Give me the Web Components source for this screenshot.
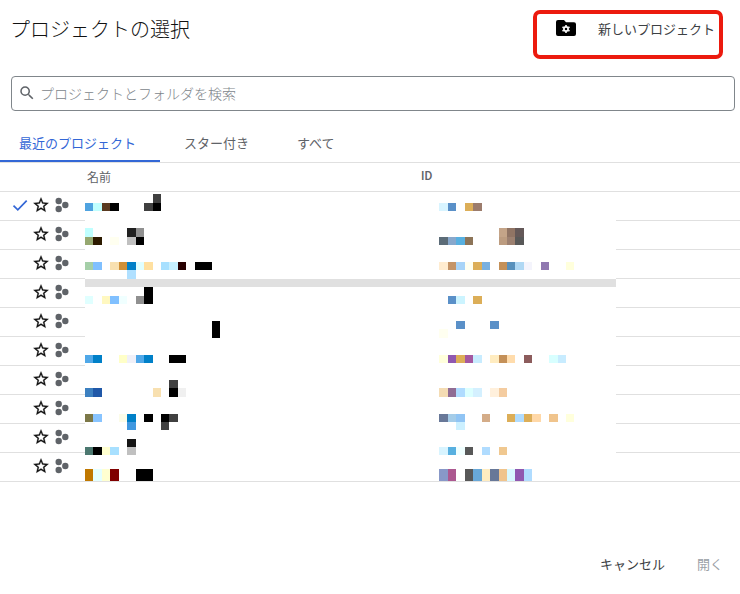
<!DOCTYPE html>
<html lang="ja">
<head>
<meta charset="utf-8">
<title>プロジェクトの選択</title>
<style>
  body {
    margin: 0;
    background: #fff;
    font-family: Roboto, "Noto Sans CJK JP", sans-serif;
  }
</style>
</head>
<body>
<project-dialog>
  <picker-header slot="header">プロジェクトの選択</picker-header>
  <picker-search slot="search">プロジェクトとフォルダを検索</picker-search>
  <picker-tabs slot="tabs"></picker-tabs>
  <project-table slot="table">
    <project-row current></project-row>
    <project-row></project-row>
    <project-row></project-row>
    <project-row></project-row>
    <project-row></project-row>
    <project-row></project-row>
    <project-row></project-row>
    <project-row></project-row>
    <project-row></project-row>
    <project-row></project-row>
    <pixel-mosaic slot="overlay"></pixel-mosaic>
  </project-table>
  <picker-footer slot="footer"></picker-footer>
</project-dialog>

<script>
class ProjectDialog extends HTMLElement {
  constructor() {
    super();
    this.attachShadow({ mode: "open" }).innerHTML = `
      <style>
        :host {
          display: flex;
          flex-direction: column;
          height: 594px;
          color: #202124;
        }
      </style>
      <slot name="header"></slot>
      <slot name="search"></slot>
      <slot name="tabs"></slot>
      <slot name="table"></slot>
      <slot name="footer"></slot>
    `;
  }
}

class PickerHeader extends HTMLElement {
  constructor() {
    super();
    this.attachShadow({ mode: "open" }).innerHTML = `
      <style>
        :host {
          display: flex;
          justify-content: space-between;
          height: 76px;
          position: relative;
        }
        .title {
          font-size: 20px;
          font-weight: 300;
          line-height: 28px;
          padding: 16px 0 0 10px;
          color: #111;
        }
        .new {
          display: flex;
          align-items: center;
          height: 28px;
          margin: 14px 25px 0 0;
          font-size: 13px;
          color: #3c4043;
        }
        svg { margin-right: 21px; }
        .mark {
          position: absolute;
          left: 533px;
          top: 10px;
          width: 190px;
          height: 49px;
          box-sizing: border-box;
          border: 4px solid #ec1a0e;
          border-radius: 7px;
        }
      </style>
      <div class="title"><slot></slot></div>
      <div class="new">
        <svg width="22" height="18" viewBox="0 0 22 18">
          <path d="M3 1h6l2 2.2h8a2 2 0 0 1 2 2V15a2 2 0 0 1-2 2H3a2 2 0 0 1-2-2V3a2 2 0 0 1 2-2z" fill="#000"/>
          <circle cx="11" cy="10" r="2.1" fill="none" stroke="#fff" stroke-width="1.7"/>
          <path d="M11 6v1.4M11 12.6V14M7.5 8l1.2.7M13.3 11.3l1.2.7M7.5 12l1.2-.7M13.3 8.7l1.2-.7" stroke="#fff" stroke-width="1.6"/>
        </svg>
        <span>新しいプロジェクト</span>
      </div>
      <div class="mark"></div>
    `;
  }
}

class PickerSearch extends HTMLElement {
  constructor() {
    super();
    this.attachShadow({ mode: "open" }).innerHTML = `
      <style>
        :host {
          display: flex;
          align-items: center;
          gap: 4px;
          height: 35px;
          margin: 0 5px 0 11px;
          padding: 0 0 2px 6px;
          box-sizing: border-box;
          border: 1px solid #80868b;
          border-radius: 4px;
          font-size: 14px;
          font-weight: 300;
          color: #80868b;
        }
        svg { flex: none; }
      </style>
      <svg width="18" height="18" viewBox="0 0 24 24">
        <path fill="#5f6368" d="M15.5 14h-.79l-.28-.27A6.47 6.47 0 0 0 16 9.5 6.5 6.5 0 1 0 9.5 16c1.61 0 3.09-.59 4.23-1.57l.27.28v.79l5 4.99L20.49 19l-4.99-5zm-6 0C7.01 14 5 11.99 5 9.5S7.01 5 9.5 5 14 7.01 14 9.5 11.99 14 9.5 14z"/>
      </svg>
      <slot></slot>
    `;
  }
}

class PickerTabs extends HTMLElement {
  constructor() {
    super();
    this.attachShadow({ mode: "open" }).innerHTML = `
      <style>
        :host {
          display: flex;
          align-items: flex-end;
          height: 52px;
          box-sizing: border-box;
          border-bottom: 1px solid #e0e0e0;
          font-size: 13px;
          color: #5f6368;
        }
        .tab {
          height: 31px;
          padding: 0 24px;
          line-height: 25px;
          box-sizing: border-box;
        }
        .active {
          width: 160px;
          padding-left: 19px;
          color: #3367d6;
          border-bottom: 2px solid #3367d6;
        }
      </style>
      <div class="tab active">最近のプロジェクト</div>
      <div class="tab">スター付き</div>
      <div class="tab">すべて</div>
    `;
  }
}

class ProjectTable extends HTMLElement {
  constructor() {
    super();
    this.attachShadow({ mode: "open" }).innerHTML = `
      <style>
        :host {
          display: block;
          position: relative;
        }
        .head {
          display: flex;
          padding-bottom: 2px;
          box-sizing: border-box;
          height: 29px;
          align-items: center;
          border-bottom: 1px solid #e0e0e0;
          font-size: 12px;
          color: #5f6368;
        }
        .name { width: 334px; margin-left: 87px; }
        .id { font-weight: 500; }
        ::slotted([slot="overlay"]) {
          position: absolute;
          left: 85px;
          top: 29px;
        }
      </style>
      <div class="head">
        <span class="name">名前</span>
        <span class="id">ID</span>
      </div>
      <slot></slot>
      <slot name="overlay"></slot>
    `;
  }
}

class ProjectRow extends HTMLElement {
  constructor() {
    super();
    const check = this.hasAttribute("current")
      ? `<svg width="16" height="16" viewBox="0 0 16 16"><path d="M1.5 8.6l4.3 4.2 8.9-9.2" fill="none" stroke="#3367d6" stroke-width="1.7"/></svg>`
      : "";
    this.attachShadow({ mode: "open" }).innerHTML = `
      <style>
        :host {
          display: flex;
          align-items: center;
          height: 28px;
          border-bottom: 1px solid #e0e0e0;
        }
        .check { width: 16px; height: 16px; margin-left: 12px; margin-top: -2px; }
        .star { margin-left: 4px; margin-top: -2px; }
        .dots { margin-left: 5px; margin-top: -3px; }
        svg { display: block; }
      </style>
      <div class="check">${check}</div>
      <svg class="star" width="18" height="18" viewBox="0 0 24 24">
        <path fill="#111" stroke="#111" stroke-width=".4" d="M22 9.24l-7.19-.62L12 2 9.19 8.63 2 9.24l5.46 4.73L5.82 21 12 17.27 18.18 21l-1.63-7.03L22 9.24zM12 15.4l-3.76 2.27 1-4.28-3.32-2.88 4.38-.38L12 6.1l1.71 4.04 4.38.38-3.32 2.88 1 4.28L12 15.4z"/>
      </svg>
      <svg class="dots" width="16" height="16" viewBox="0 0 16 16">
        <circle cx="3.7" cy="4" r="3.2" fill="#5f6368"/>
        <circle cx="3.7" cy="12" r="3.2" fill="#5f6368"/>
        <circle cx="10.3" cy="8" r="3.2" fill="#5f6368"/>
      </svg>
    `;
  }
}

// band tops on the page, last one closes the overlay
const BAND_TOPS = [192, 194, 203, 211, 228, 237, 245, 262, 270, 279, 287, 296, 304, 321, 329, 338, 355, 363, 380, 388, 397, 414, 422, 430, 439, 447, 455, 469, 481];

// [band top, left cells, id cells], a cell is column + colour, "+n" after the colour is a wider span
const BANDS = [
  [194, ["8#404040"], []],
  [203, ["0#4fa3e0", "1#c0ffff", "2#5a3a20", "3#000", "7#404040", "8#000"], ["0#d8f4ff", "1#5a90c8", "3#dcae58", "4#9c7c6c"]],
  [228, ["0#c0ffff", "5#202020", "6#909090"], ["7#c4a488", "8#907464", "9#645858"]],
  [237, ["0#96a870", "1#2c1a00", "3#fffff0", "5#c0c0c0", "6#000"], ["0#5c6c78", "1#88a8cc", "2#58b0e0", "3#8c7458", "7#bc9c80", "8#9c8070", "9#585858"]],
  [262, ["0#a5cfa8", "1#80c0ff", "3#f8e0b0", "4#d09038", "5#0080c8", "6#e0ffff", "7#ffe0a0", "9#a8e0ff", "10#c8f0ff", "11#280000", "13#000+2"], ["0#ffecd0", "1#c49468", "2#a8d4f8", "3#fffff0", "4#dcae58", "5#78b0e0", "7#c49058", "8#5890bc", "9#b0d8f4", "10#f4f4fc", "12#9078b0", "15#ffffdc"]],
  [270, ["5#b0e0ff"], []],
  [287, ["7#000"], []],
  [296, ["0#e0ffff", "2#fff8c0", "3#80c0ff", "4#f0ffff", "6#909090", "7#000"], ["1#5a90c8", "2#ccf4ff", "4#dcae58"]],
  [321, ["15#000"], ["2#5a90c8", "6#5a90c8"]],
  [329, ["15#000"], ["0#fffff0"]],
  [355, ["0#50a8e8", "1#0080c8", "4#ffffc8", "5#f0f0f8", "6#50a8e8", "7#0080c8", "10#000+2"], ["0#ffffdc", "1#9058b0", "2#dcae58", "3#a458a0", "4#c8ecff", "6#ffecc0", "7#c49058", "8#ffdcac", "10#8c5c5c", "13#d8ffff", "14#c8ecff"]],
  [380, ["10#404040"], []],
  [388, ["0#3c80c0", "1#2058a8", "8#f8e0b0", "10#000", "11#f0f0f0"], ["0#f4dcb4", "1#906c94", "2#b0dcff", "3#dcffff", "4#d4f0ff", "6#fff0dc", "7#f4cca0"]],
  [414, ["0#7c7848", "1#88c4ff", "4#fcfce8", "5#0080c8", "7#000", "9#000", "10#404040"], ["0#687898", "1#a4cce8", "2#90c4f4", "5#d4ac88", "8#dcae58", "9#b0dcff", "10#dcae58", "11#ffd8a8", "13#f0c48c", "15#ffffdc"]],
  [422, ["5#4098e0", "9#404040"], ["2#ccf0ff"]],
  [439, ["5#141414"], []],
  [447, ["0#4c7870", "1#000", "2#ffffd0", "3#a8e0ff", "5#c0c0c0"], ["0#d8f4ff", "1#58b0e0", "2#f0ffff", "3#585858", "5#b0dcff", "7#f0c890"]],
  [469, ["0#c07800", "1#e4ffff", "2#ffffd0", "3#800000", "6#000+2"], ["0#8898c8", "1#ac5890", "3#585858", "4#68a8d8", "5#ffecc0", "6#687898", "7#f0c48c", "8#d8f8ff", "9#9058b0", "10#b0dcff"]]
];

class PixelMosaic extends HTMLElement {
  constructor() {
    super();
    const rows = BAND_TOPS.slice(1).map((y, i) => `${y - BAND_TOPS[i]}px`).join(" ");
    const cell = (text, band, offset) => {
      const [, col, colour, span] = text.match(/^(\d+)(#[0-9a-f]+)(?:\+(\d+))?$/);
      const start = Number(col) + offset;
      return `<i style="grid-area:${band}/${start}/auto/span ${span || 1};background:${colour}"></i>`;
    };
    let cells = "";
    BANDS.forEach(([top, left, ids]) => {
      const band = BAND_TOPS.indexOf(top) + 1;
      cells += left.map((c) => cell(c, band, 1)).join("");
      cells += ids.map((c) => cell(c, band, 43)).join("");
    });
    this.attachShadow({ mode: "open" }).innerHTML = `
      <style>
        :host {
          display: grid;
          width: 531px;
          height: 289px;
          background: #fff;
          grid-template-columns: repeat(41, 8.45px) 8.5px repeat(17, 8.45px) 1fr;
          grid-template-rows: ${rows};
        }
        .band {
          grid-column: 1 / -1;
          grid-row: ${BAND_TOPS.indexOf(279) + 1};
          background: #e0e0e0;
        }
      </style>
      <div class="band"></div>
      ${cells}
    `;
  }
}

class PickerFooter extends HTMLElement {
  constructor() {
    super();
    this.attachShadow({ mode: "open" }).innerHTML = `
      <style>
        :host {
          display: flex;
          justify-content: flex-end;
          gap: 32px;
          padding: 73px 17px 0 0;
          font-size: 13px;
          line-height: 20px;
          color: #3c4043;
        }
        .off { color: #9aa0a6; }
      </style>
      <span>キャンセル</span>
      <span class="off">開く</span>
    `;
  }
}

customElements.define("project-dialog", ProjectDialog);
customElements.define("picker-header", PickerHeader);
customElements.define("picker-search", PickerSearch);
customElements.define("picker-tabs", PickerTabs);
customElements.define("project-table", ProjectTable);
customElements.define("project-row", ProjectRow);
customElements.define("pixel-mosaic", PixelMosaic);
customElements.define("picker-footer", PickerFooter);
</script>
</body>
</html>
